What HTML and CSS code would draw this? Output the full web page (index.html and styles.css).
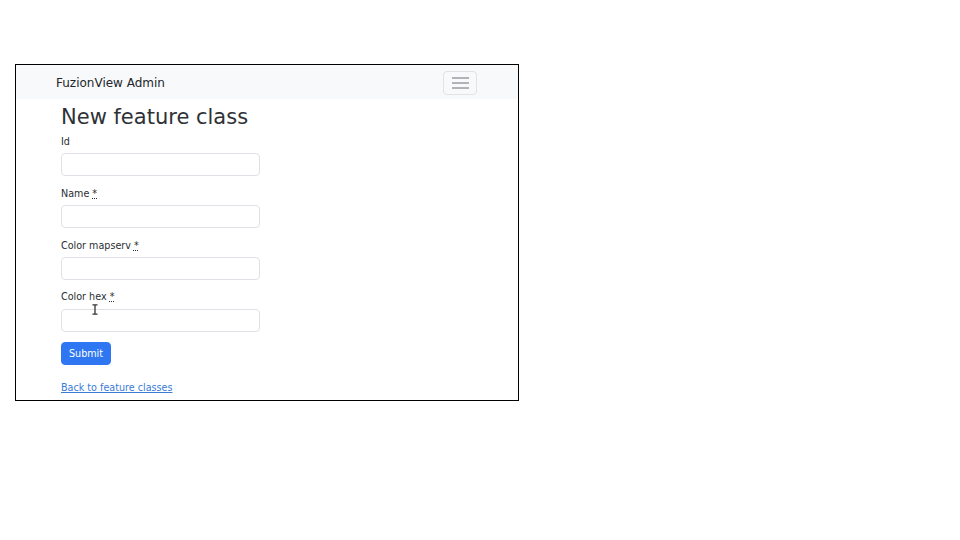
FILE: index.html
```html
<!DOCTYPE html>
<html lang="en">
<head>
<meta charset="utf-8">
<title>New feature class</title>
<link rel="stylesheet" href="styles.css">
</head>
<body>
<div class="frame">
  <nav class="navbar">
    <span class="brand">FuzionView Admin</span>
    <button class="toggler" type="button" aria-label="Toggle navigation">
      <svg width="17" height="12" viewBox="0 0 17 12"><path d="M0 1h17M0 6h17M0 11h17" stroke="#6b6f73" stroke-width="1.2" fill="none"/></svg>
    </button>
  </nav>
  <main class="content">
    <h1 class="title">New feature class</h1>
    <form class="form">
      <div class="field">
        <label class="label">Id</label>
        <input class="input" type="text">
      </div>
      <div class="field">
        <label class="label">Name <abbr class="req" title="required">*</abbr></label>
        <input class="input" type="text">
      </div>
      <div class="field">
        <label class="label">Color mapserv <abbr class="req" title="required">*</abbr></label>
        <input class="input" type="text">
      </div>
      <div class="field">
        <label class="label">Color hex <abbr class="req" title="required">*</abbr></label>
        <input class="input" type="text">
      </div>
      <button class="submit" type="button">Submit</button>
    </form>
    <p class="back"><a href="#" class="back-link">Back to feature classes</a></p>
  </main>
  <svg class="cursor" width="6" height="11" viewBox="0 0 6 11"><path d="M0.5 0.8h5M0.5 10.2h5M3 0.8v9.4" stroke="#333" stroke-width="1.3" fill="none"/></svg>
</div>
</body>
</html>
```
FILE: styles.css
```css
html, body {
  margin: 0;
  padding: 0;
  background: #fff;
}
body {
  padding: 64px 0 0 15px;
  font-family: "DejaVu Sans", sans-serif;
  color: #212529;
}
.frame {
  position: relative;
  box-sizing: border-box;
  width: 504px;
  height: 337px;
  border: 1px solid #000;
  overflow: hidden;
  background: #fff;
}
.navbar {
  box-sizing: border-box;
  height: 34px;
  background: #f8f9fa;
  display: flex;
  align-items: center;
  justify-content: space-between;
  padding: 0 41px 0 40px;
}
.brand {
  font-size: 12px;
  line-height: 18px;
  color: #212529;
  margin-top: 1px;
}
.toggler {
  box-sizing: border-box;
  width: 34px;
  height: 24px;
  padding: 0;
  margin: 1px 0 0 0;
  border: 1px solid #e2e3e5;
  border-radius: 4px;
  background: transparent;
  display: flex;
  align-items: center;
  justify-content: center;
}
.toggler svg { display: block; }
.content {
  padding: 6px 0 0 45px;
}
.title {
  margin: 0 0 4.8px 0;
  font-size: 21px;
  font-weight: normal;
  line-height: 1.2;
  color: #2e3236;
}
.form {
  display: flex;
  flex-direction: column;
  align-items: flex-start;
}
.field {
  display: flex;
  flex-direction: column;
  align-items: flex-start;
  margin-bottom: 10.4px;
}
.label {
  font-size: 9.6px;
  line-height: 14.4px;
  margin-bottom: 4px;
  color: #2a2e32;
}
.req {
  text-decoration: underline dotted;
  cursor: help;
}
.input {
  box-sizing: border-box;
  width: 199px;
  height: 23px;
  margin: 0;
  border: 1px solid #dee2e6;
  border-radius: 4px;
  background: #fff;
  font: 9.6px "DejaVu Sans", sans-serif;
}
.submit {
  box-sizing: border-box;
  height: 23px;
  padding: 0 7px;
  margin-top: 0;
  border: 1px solid #2f77f2;
  border-radius: 4px;
  background: #2f77f2;
  color: #fff;
  font: 9.6px "DejaVu Sans", sans-serif;
}
.back {
  margin: 16px 0 0 0;
  font-size: 9.6px;
  line-height: 14.4px;
}
.back-link {
  color: #3a7bd9;
  text-decoration: underline;
}
.cursor {
  position: absolute;
  left: 76px;
  top: 239px;
}
```
